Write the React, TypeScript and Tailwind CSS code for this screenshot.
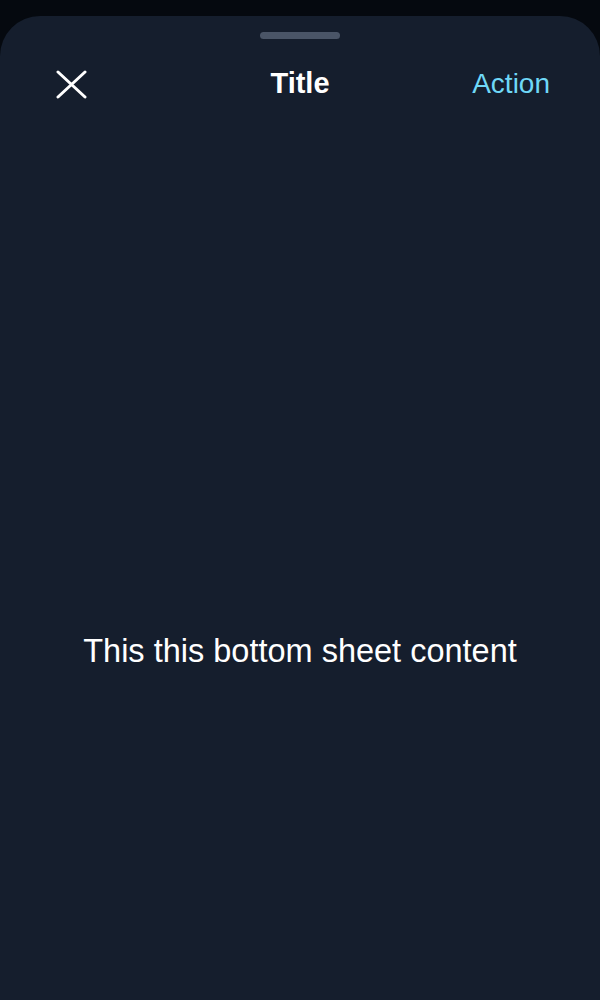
import React from "react";

export default function App() {
  return (
    <div
      className="flex h-screen w-full flex-col bg-[#05090f] pt-4"
      style={{ fontFamily: '"Liberation Sans", Arial, sans-serif' }}
    >
      <div className="flex flex-1 flex-col rounded-t-[40px] bg-[#151e2d]">
        <div className="flex justify-center pt-4">
          <div className="h-[7px] w-20 rounded-full bg-[#4a5567]" />
        </div>
        <div className="grid h-[90px] grid-cols-[1fr_auto_1fr] items-center px-[50px]">
          <div className="flex justify-start pl-[6px]">
            <svg width="31" height="29" viewBox="0 0 31 29" fill="none">
              <path
                d="M2 2 L29 27 M29 2 L2 27"
                stroke="white"
                strokeWidth="3"
                strokeLinecap="round"
              />
            </svg>
          </div>
          <div className="text-[29px] font-bold text-white">Title</div>
          <div className="flex justify-end text-[28px] text-[#6fd8f7]">Action</div>
        </div>
        <div className="pt-[502px] text-center text-[32.5px] leading-[40px] text-white">
          This this bottom sheet content
        </div>
      </div>
    </div>
  );
}
